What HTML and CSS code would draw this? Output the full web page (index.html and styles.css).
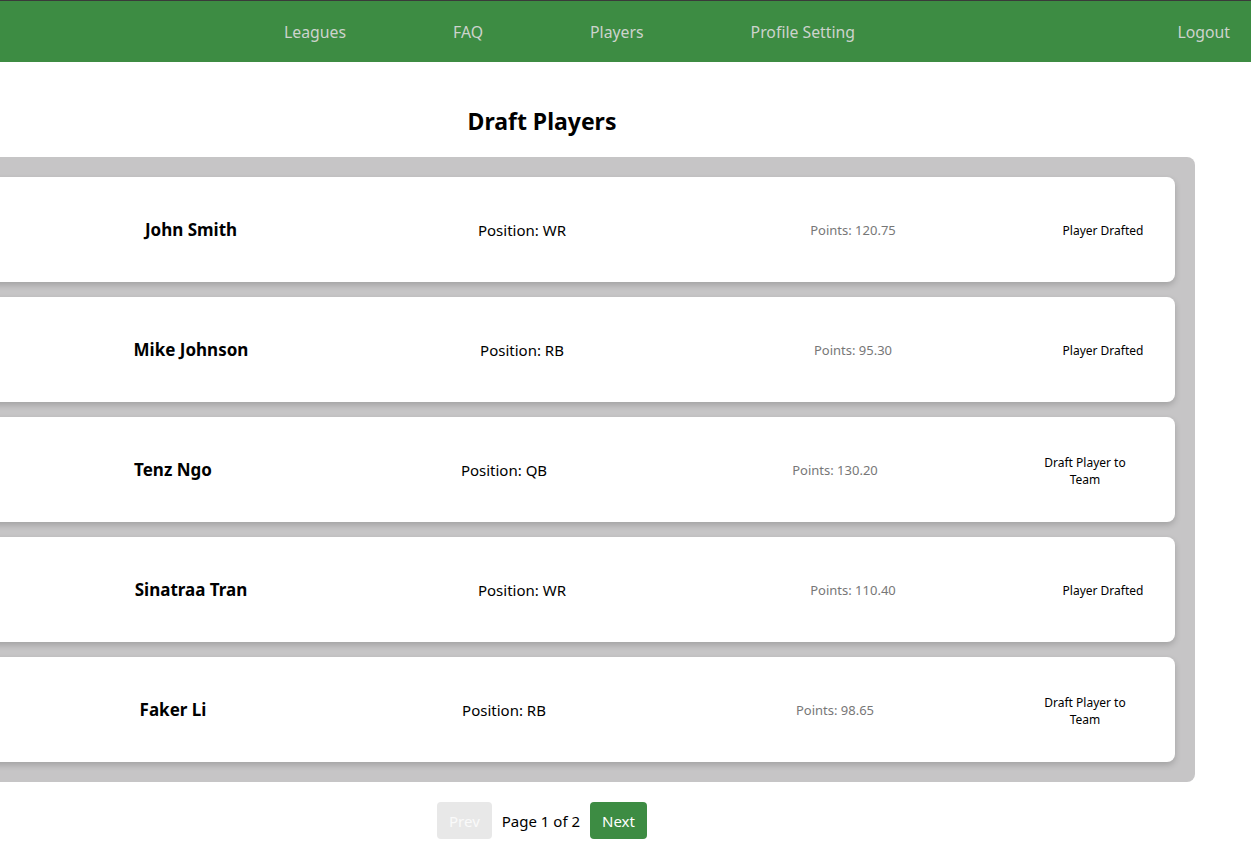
FILE: index.html
```html
<!DOCTYPE html>
<html lang="en">
<head>
<meta charset="utf-8">
<title>Draft Players</title>
<link rel="stylesheet" href="styles.css">
</head>
<body>
<header class="navbar">
  <nav class="nav-links">
    <a href="#" class="nav-link">Leagues</a>
    <a href="#" class="nav-link">FAQ</a>
    <a href="#" class="nav-link">Players</a>
    <a href="#" class="nav-link">Profile Setting</a>
  </nav>
  <a href="#" class="nav-link logout">Logout</a>
</header>
<main class="page">
  <h1 class="title">Draft Players</h1>
  <section class="player-list">
    <div class="player-card">
      <div class="col name">John Smith</div>
      <div class="col position">Position: WR</div>
      <div class="col points">Points: 120.75</div>
      <div class="col action">Player Drafted</div>
    </div>
    <div class="player-card">
      <div class="col name">Mike Johnson</div>
      <div class="col position">Position: RB</div>
      <div class="col points">Points: 95.30</div>
      <div class="col action">Player Drafted</div>
    </div>
    <div class="player-card open">
      <div class="col name">Tenz Ngo</div>
      <div class="col position">Position: QB</div>
      <div class="col points">Points: 130.20</div>
      <div class="col action"><button class="draft-btn">Draft Player to Team</button></div>
    </div>
    <div class="player-card">
      <div class="col name">Sinatraa Tran</div>
      <div class="col position">Position: WR</div>
      <div class="col points">Points: 110.40</div>
      <div class="col action">Player Drafted</div>
    </div>
    <div class="player-card open">
      <div class="col name">Faker Li</div>
      <div class="col position">Position: RB</div>
      <div class="col points">Points: 98.65</div>
      <div class="col action"><button class="draft-btn">Draft Player to Team</button></div>
    </div>
  </section>
  <div class="pagination">
    <button class="page-btn disabled">Prev</button>
    <span class="page-info">Page 1 of 2</span>
    <button class="page-btn">Next</button>
  </div>
</main>
</body>
</html>
```
FILE: styles.css
```css
* { box-sizing: border-box; }
html, body { margin: 0; padding: 0; background: #fff; }
body {
  font-family: "Noto Sans", "Open Sans", sans-serif;
  color: #000;
  overflow: hidden;
}
.navbar {
  display: flex;
  align-items: center;
  height: 62px;
  background: #3d8c43;
  border-top: 1px solid #3a3a3a;
  padding-top: 1px;
}
.nav-links {
  display: flex;
  gap: 107px;
  margin-left: 284px;
}
.nav-link {
  color: #cdd3cd;
  text-decoration: none;
  font-size: 15.8px;
}
.logout { margin-left: auto; margin-right: 21px; }

.page {
  width: 1306px;
  margin-left: -111px;
}
.title {
  margin: 0;
  padding: 43px 0 20px;
  text-align: center;
  font-size: 23px;
  font-weight: 700;
  line-height: 32px;
}
.player-list {
  background: #c6c5c6;
  border-radius: 8px;
  padding: 20px;
  display: flex;
  flex-direction: column;
  gap: 15px;
}
.player-card {
  background: #fff;
  border-radius: 8px;
  height: 105px;
  box-shadow: 0 3px 6px rgba(0,0,0,0.18);
  display: flex;
  align-items: center;
  justify-content: flex-end;
  padding-right: 22px;
}
.player-card.open { padding-right: 40px; }
.col { text-align: center; }
.name { width: 300px; font-weight: 700; font-size: 17px; }
.position { width: 300px; margin-left: 31px; font-size: 15px; }
.points { width: 300px; margin-left: 31px; font-size: 13px; color: #777; }
.action { width: 100px; margin-left: 50px; font-size: 12px; line-height: 17px; padding-top: 2px; }
.draft-btn {
  font: inherit;
  background: none;
  border: 0;
  padding: 0;
  color: #000;
  width: 100px;
  line-height: 17px;
  text-align: center;
}
.pagination {
  display: flex;
  justify-content: center;
  align-items: center;
  gap: 10px;
  margin-top: 20px;
}
.page-btn {
  font: inherit;
  font-size: 15px;
  height: 37px;
  padding: 0 12px;
  border: 0;
  border-radius: 4px;
  background: #3d8c43;
  color: #fff;
}
.page-btn.disabled { background: #e8e8e8; color: #fafafa; }
.page-info { font-size: 15px; }
```
